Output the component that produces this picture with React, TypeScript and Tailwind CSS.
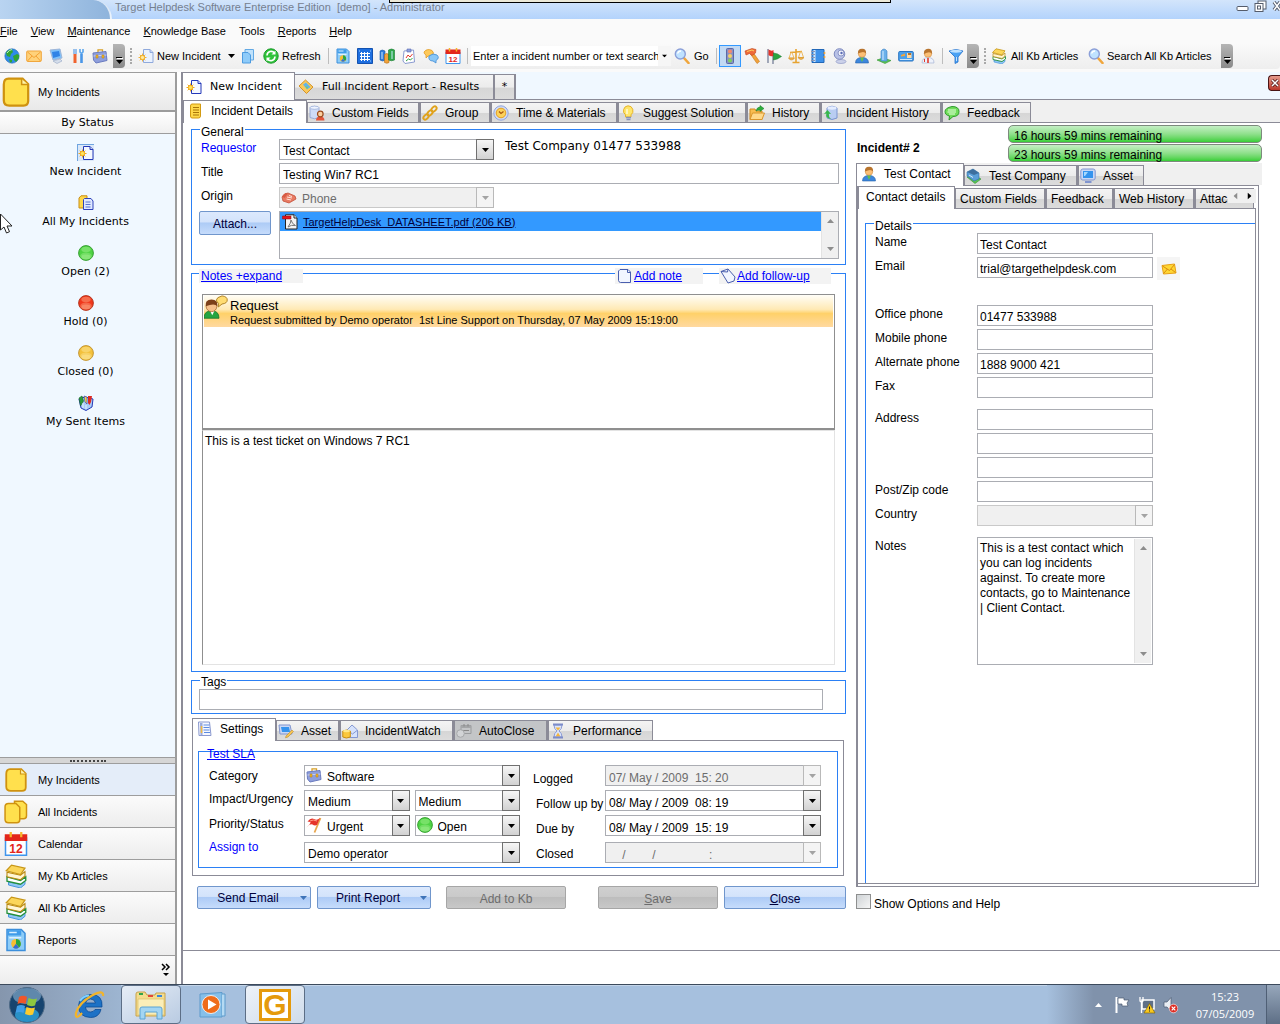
import { ReactNode } from "react";
import clsx from "clsx";

const icons: Record<string, ReactNode> = {
  globe: (
    <>
      <circle cx="8" cy="8" r="7.2" fill="#2f8be8" stroke="#2a6fb5" strokeWidth=".6" />
      <path d="M2 5Q4 1 8 1.500L9 4 7 6 6 9 3 8ZM9 8l4-2 2 1v3l-3 4-2-2ZM5 11l3 1v2l-2 .8z" fill="#31a534" />
      <path d="M3 5q2-3 5-3.500" stroke="#b9f2b4" fill="none" />
    </>
  ),
  mail: (
    <>
      <rect x=".7" y="3" width="14.600" height="10.500" rx="1" fill="#ffd27a" stroke="#f0a63c" />
      <path d="M1.500 4 8 9.500 14.500 4M1.500 13 6 8M14.500 13 10 8" stroke="#f3a133" fill="none" />
    </>
  ),
  mailTilt: (
    <>
      <path d="M1 4.500 13.500 3 15 12 2.500 13Z" fill="#ffd633" stroke="#e8a013" />
      <path d="M1.500 5 8.500 9.500 13.500 3.500M2.500 12.500 6.500 8M14.500 11.500 10 8" stroke="#d88c0e" fill="none" />
    </>
  ),
  server: (
    <>
      <path d="M2 2 12 1l2 9-9 2Z" fill="#7cc0fa" stroke="#9fb6d8" />
      <path d="M4 4l7-1 1 5-7 2z" fill="#2f83e6" />
      <path d="M5 13l7-2 2 2-5 2.500z" fill="#d5deeb" stroke="#93a6c4" strokeWidth=".6" />
    </>
  ),
  tools: (
    <>
      <path d="M4 1v5M6 1v5" stroke="#78aee8" strokeWidth="1.500" />
      <path d="M5 6v9" stroke="#f0632e" strokeWidth="3" />
      <path d="M10 1v3l1.500 1.500L13 4V1" stroke="#5aa6ee" strokeWidth="1.600" fill="none" />
      <path d="M11.500 6v9" stroke="#4996e8" strokeWidth="2.600" />
    </>
  ),
  briefcase: (
    <>
      <path d="M6 4V1.800h4.500V4" stroke="#d7a027" strokeWidth="1.300" fill="none" />
      <path d="M1 5l13-1.500 1 9L4 15 1.500 12Z" fill="#8f9fdc" stroke="#6a7bbf" />
      <path d="M1.500 8 14.500 7" stroke="#c7d0f3" />
      <path d="M4 7h2v3H4zM10 7h2v3h-2z" fill="#f5b829" stroke="#b07c10" strokeWidth=".5" />
    </>
  ),
  newDoc: (
    <>
      <path d="M5.500 1.500H12L15 4.500V14.500H5.500Z" fill="#f4f8ff" stroke="#2438b8" />
      <path d="M12 1.500v3h3" fill="#c9d6f7" stroke="#2438b8" />
      <path d="M4.500 4.500v8M.5 8.500h8M1.700 5.700l5.600 5.600M7.300 5.700l-5.600 5.600" stroke="#f1a91d" />
      <circle cx="4.500" cy="8.500" r="2.200" fill="#ffe45c" stroke="#f1a91d" />
    </>
  ),
  newDocSoft: (
    <>
      <path d="M5.500 1.500H12L15 4.500V14.500H5.500Z" fill="#eaf2ff" stroke="#8fa9dc" />
      <path d="M12 1.500v3h3" fill="#c9d6f7" stroke="#8fa9dc" />
      <path d="M4.500 5.500v8M.5 9.500h8M1.700 6.700l5.600 5.600M7.300 6.700l-5.600 5.600" stroke="#f5b640" />
      <circle cx="4.500" cy="9.500" r="2.200" fill="#ffe9a0" stroke="#f1a91d" />
    </>
  ),
  copy: (
    <>
      <path d="M5 1.500h8.500V12H5Z" fill="#bfe1fb" stroke="#63a9e4" />
      <path d="M2.500 4.500H8L10.500 7V15h-8Z" fill="#8ecbf9" stroke="#4d9be0" />
    </>
  ),
  refresh: (
    <>
      <circle cx="8" cy="8" r="7.200" fill="#2fc33a" stroke="#189a28" />
      <path d="M4 7.500A4.200 4.200 0 0 1 11.500 5M12 8.500A4.200 4.200 0 0 1 4.500 11" stroke="#fff" strokeWidth="1.600" fill="none" />
      <path d="M12.500 2.500v4h-4zM3.500 13.500v-4h4z" fill="#fff" />
    </>
  ),
  report: (
    <>
      <path d="M2 1h9.500L14 3.500V15H2Z" fill="#8ecdf8" stroke="#3c8fdc" />
      <path d="M2.500 1.500h9V5h-9z" fill="#3f9cea" />
      <path d="M3.500 3h5M3.500 6.500h8" stroke="#d9efff" />
      <circle cx="8" cy="10.500" r="3.200" fill="#f6bd33" />
      <path d="M8 10.500V7.300a3.200 3.200 0 0 1 2 5.700Z" fill="#25a744" />
      <path d="M8 10.500l2 2.500a3.200 3.200 0 0 1-4 0z" fill="#2f6fd8" />
    </>
  ),
  grid: (
    <>
      <path d="M.5.500h15v15H.5Z" fill="#1e6fe0" stroke="#1352b0" />
      <path d="M4.500 4v9M7.500 4v9M10.500 4v9M3 5.500h10M3 8.500h10M3 11.500h10" stroke="#fff" />
      <path d="M13 3h1M2 3h1M13 13h1" stroke="#9fd0ff" />
    </>
  ),
  cylinders: (
    <>
      <path d="M1 3q2-2 5 0v9q-2 2-5 0Z" fill="#2f7ddb" stroke="#1c5aa8" strokeWidth=".6" />
      <path d="M5.500 6.500q2-2 4.500 0v8q-2 1.500-4.500 0Z" fill="#f2a33b" stroke="#b36c15" strokeWidth=".6" />
      <path d="M9.500 2q3-2 6 0v10q-3 1.500-6 0Z" fill="#2fa74b" stroke="#1a7a30" strokeWidth=".6" />
      <path d="M3 4v7M13 3v8" stroke="#c9ecff" />
    </>
  ),
  clipboard: (
    <>
      <path d="M3 3 12.500 2l1 12L4 15.500 2 13Z" fill="#fff" stroke="#8a9bd0" />
      <path d="M6 1h4v3H6z" fill="#8fa0dc" stroke="#5a6cb5" strokeWidth=".6" />
      <path d="M5 10l2-3 2 2 2.500-3" stroke="#e2382a" fill="none" />
      <path d="M5 13l2.500-2 2 1 2-2" stroke="#2ea044" fill="none" />
    </>
  ),
  chat: (
    <>
      <path d="M1 4q3-4 8-1.500Q12 5 9 7.500L5 8 3 10V7Q1 6 1 4Z" fill="#fdc95a" stroke="#e29a23" strokeWidth=".8" />
      <path d="M6 8q4-3.500 8-1 3 3-1 5.500v2.500l-3-2Q5 13 6 8Z" fill="#8ac7f6" stroke="#3f8bd6" strokeWidth=".8" />
    </>
  ),
  calendar: (
    <>
      <path d="M1 4h14v11.500H1Z" fill="#fff" stroke="#3f95ec" />
      <path d="M.5 1.500h15V6H.5Z" fill="#e3261b" />
      <path d="M4.500 0v3.500M11.500 0v3.500" stroke="#f7b52a" strokeWidth="1.500" />
      <text x="8" y="13.800" textAnchor="middle" fontSize="8" fontWeight="bold" fontFamily="Liberation Sans" fill="#e3261b">
        12
      </text>
    </>
  ),
  search: (
    <>
      <path d="M9.500 9.500 14.500 15" stroke="#f0a63c" strokeWidth="2.600" strokeLinecap="round" />
      <circle cx="6.300" cy="6" r="5" fill="#bfe2ff" stroke="#8b9fd8" strokeWidth="1.400" />
      <path d="M3.500 5.500q1-2.500 3.500-2.500" stroke="#fff" fill="none" strokeWidth="1.300" />
    </>
  ),
  traffic: (
    <>
      <rect x="4.500" y=".5" width="7" height="15" rx="1" fill="#8791c4" stroke="#5d68a3" />
      <circle cx="8" cy="3.500" r="2" fill="#f3876f" />
      <circle cx="8" cy="8" r="2" fill="#f7cf62" />
      <circle cx="8" cy="12.500" r="2" fill="#7ed05c" />
    </>
  ),
  hammer: (
    <>
      <path d="M6.500 6l6.500 9.500 2.500-2L9.500 5Z" fill="#f2a33b" stroke="#c2741a" strokeWidth=".6" />
      <path d="M1 3l7-2.500 4 1L11.500 5 8 7.500 5.500 5.500 2 7Z" fill="#ee6a3a" stroke="#c3431a" strokeWidth=".6" />
      <path d="M3 3.500 8 2l2 1" stroke="#ffd25e" fill="none" />
    </>
  ),
  flags: (
    <>
      <path d="M2 1v14M7 4v12" stroke="#6c7691" strokeWidth="1.200" />
      <path d="M2.500 1.500q3 2 5 .5v6q-3 1-5-1Z" fill="#e5342a" />
      <path d="M7.500 5q4 0 8 3.500-4 3-8 3.500Z" fill="#2aa53f" stroke="#127226" strokeWidth=".5" />
    </>
  ),
  scales: (
    <>
      <path d="M8 1v13M4.500 14.500h7M2 4.500l12-1" stroke="#e6a330" strokeWidth="1.600" />
      <path d="M3 4.500 1 10h5L4 4.500M12.500 3.500l-2 6h5l-2-6" stroke="#edba62" fill="none" />
      <path d="M.5 10h6q-1 2-3 2t-3-2ZM10 9.500h6q-1 2-3 2t-3-2Z" fill="#f2b34b" stroke="#cb8820" strokeWidth=".5" />
    </>
  ),
  notebook: (
    <>
      <path d="M2 1.500h12v13H2Z" fill="#3f92ea" stroke="#2368b8" />
      <path d="M4.500 2v12" stroke="#cfe5fb" strokeWidth="2" />
      <path d="M1 3.500h4M1 6.500h4M1 9.500h4M1 12.500h4" stroke="#8a97b5" />
      <path d="M14.500 4v2M14.500 8v2" stroke="#f2a33b" strokeWidth="1.600" />
    </>
  ),
  webcam: (
    <>
      <ellipse cx="9" cy="13.500" rx="5" ry="2" fill="#ccd2ea" stroke="#8f99c4" strokeWidth=".7" />
      <circle cx="7.500" cy="6" r="5.300" fill="#b8c1e6" stroke="#7e8abf" />
      <circle cx="9" cy="5" r="3" fill="#eef1fb" stroke="#8b95c6" />
      <circle cx="9.500" cy="5" r="1.200" fill="#5a6cb5" />
    </>
  ),
  user: (
    <>
      <path d="M1.500 15q0-5.500 6.500-5.500t6.500 5.500Z" fill="#3d87dc" stroke="#2661ab" strokeWidth=".6" />
      <path d="M6 9.500h4L8 14Z" fill="#5fc24e" />
      <circle cx="8" cy="5.500" r="3.800" fill="#fbbf75" stroke="#c9843c" strokeWidth=".5" />
      <path d="M4 5.500Q3.500 1 8 .8t4 4.700Q10 2.500 4 5.500Z" fill="#b8742e" />
    </>
  ),
  tower: (
    <>
      <path d="M1 12l6-2 8 2.500-6 3Z" fill="#5cc653" stroke="#2f9030" strokeWidth=".6" />
      <path d="M5 3q3-4 6 0v10H5Z" fill="#6ab0ea" stroke="#3d81c4" strokeWidth=".6" />
      <path d="M7 3v9" stroke="#b8dcfa" strokeWidth="1.400" />
    </>
  ),
  card: (
    <>
      <rect x=".7" y="3.500" width="14.600" height="9.500" rx="1" fill="#4ba0ec" stroke="#2a74c2" />
      <path d="M9 5h4.500v5H9Z" fill="#ffd9a3" />
      <path d="M10 5h3v2h-3Z" fill="#b8742e" />
      <path d="M3 7l4-1.500V8L3 8.500Z" fill="#f5a43a" />
      <path d="M2 11.500h12" stroke="#cde6fc" />
    </>
  ),
  doctor: (
    <>
      <path d="M2 15q0-5.500 6-5.500t6 5.500Z" fill="#eef2fb" stroke="#a8b4d4" strokeWidth=".7" />
      <path d="M8 10v5" stroke="#e2382a" strokeWidth="1.600" />
      <path d="M4.500 11v3" stroke="#e2382a" />
      <circle cx="8" cy="5.500" r="3.800" fill="#fbbf75" stroke="#c9843c" strokeWidth=".5" />
      <path d="M4 6Q3.500 1 8 .8T12 6Q10 2.500 4 6Z" fill="#b8742e" />
    </>
  ),
  funnel: (
    <>
      <path d="M1 3q7-3 14 0l-5 6v5l-3 1.500V9Z" fill="#4aa2f4" stroke="#2470cc" strokeWidth=".8" />
      <ellipse cx="8" cy="3.200" rx="6" ry="1.500" fill="#bfe2ff" />
      <path d="M8.500 9v4" stroke="#c3e3ff" />
    </>
  ),
  books: (
    <>
      <path d="M3 12l8 1.500 3-2v2L11 16 3 14Z" fill="#8ec6f4" stroke="#3c8fdc" strokeWidth=".6" />
      <path d="M2 8.500l9 2.500 3.500-2.500v2.500L11 13.500 2 11.500Z" fill="#fff" stroke="#25913a" strokeWidth=".9" />
      <path d="M2 5.500l9 2 3-2.500v3L11 10.500 2 8.500Z" fill="#fff6d5" stroke="#b8860b" strokeWidth=".7" />
      <path d="M1.500 4.500 5 .8l9 2L11 7Z" fill="#fbd65a" stroke="#c79616" strokeWidth=".8" />
    </>
  ),
  page: (
    <>
      <path d="M4 .8h7.500l3 3v9q0 2.400-2.500 2.400H4.500Q1.500 15.200 1.500 12.500V4Q1.500.8 4 .8Z" fill="#ffe04d" stroke="#cf9210" strokeWidth="1.200" />
      <path d="M11 1v3h3.500" fill="#fff3a8" stroke="#cf9210" strokeWidth=".8" />
    </>
  ),
  pages: (
    <>
      <path d="M7 .8h5.500L15 3v7.500q0 2-2 2H7Z" fill="#ffe04d" stroke="#cf9210" />
      <path d="M3 2.300h5l2.500 2.500v8.400q0 2-2 2H3q-2.300 0-2.300-2.300V4.500Q.7 2.300 3 2.300Z" fill="#ffe04d" stroke="#cf9210" />
    </>
  ),
  docPair: (
    <>
      <path d="M3 .8h6V13H1V3Z" fill="#ffd84a" stroke="#c98e12" />
      <path d="M6.500 3.500h6.500l2 2.500v8.500H5.500V4.500Z" fill="#dfe9ff" stroke="#2f43bb" />
      <path d="M7.500 7h5M7.500 9.500h5M7.500 12h5" stroke="#4c68cc" strokeWidth=".9" />
    </>
  ),
  sent: (
    <>
      <path d="M1 4l6-2 8 2-1 8-6 3.500L3 13Z" fill="#a9ccf6" stroke="#2438b8" />
      <path d="M1 3l3-2 1.500 5-3 5Z" fill="#2a9a3d" stroke="#176326" strokeWidth=".6" />
      <path d="M6 1l3 1v7L7 7Z" fill="#fbd24b" stroke="#2438b8" strokeWidth=".6" />
      <path d="M10 1h4l-1 6-1.500 3L10 8Z" fill="#dd2a24" />
      <path d="M5 8v5M8 10v4" stroke="#e4f1ff" />
    </>
  ),
  note: (
    <>
      <path d="M4 1h8.500v12q0 2-2 2H4Q2.500 15 2.500 13V3Q2.500 1 4 1Z" fill="#ffd84a" stroke="#d29a12" />
      <path d="M5 4.500h6M5 7h6M5 9.500h6M5 12h6" stroke="#a97608" />
    </>
  ),
  map: (
    <>
      <path d="M1 7 7.500 1 15 8 8.500 14.500Z" fill="#fbc95a" stroke="#d49429" />
      <path d="M5 5.500 8 3.500l4.500 4.500-3.500 2.500Z" fill="#62b4e8" />
      <path d="M7 7l3 1-1 2z" fill="#78cc62" />
    </>
  ),
  dbUser: (
    <>
      <path d="M1 2.500q4.500-2.500 9 0v10q-4.500 2.500-9 0Z" fill="#cfdcf6" stroke="#8a9fd0" strokeWidth=".8" />
      <ellipse cx="5.500" cy="2.700" rx="4.400" ry="1.600" fill="#eef4ff" stroke="#8a9fd0" strokeWidth=".6" />
      <path d="M7 15.500q0-4 4.200-4t4.300 4Z" fill="#e2563b" />
      <circle cx="11.300" cy="9" r="2.800" fill="#fcd0a0" stroke="#9c4a1c" strokeWidth="1.200" />
    </>
  ),
  chain: (
    <g fill="none" stroke="#e0a21b" strokeWidth="2">
      <ellipse cx="4" cy="12" rx="3" ry="2" transform="rotate(-45 4 12)" />
      <ellipse cx="8" cy="8" rx="3" ry="2" transform="rotate(-45 8 8)" />
      <ellipse cx="12" cy="4" rx="3" ry="2" transform="rotate(-45 12 4)" />
    </g>
  ),
  clock: (
    <>
      <circle cx="8" cy="8" r="7.200" fill="#cfdaf6" stroke="#93a5d8" />
      <circle cx="8" cy="8" r="4.800" fill="#fcd25a" stroke="#e5a020" />
      <path d="M6 6.500 8 8.500 10.500 6.500" stroke="#a8550f" fill="none" strokeWidth="1.300" />
    </>
  ),
  bulb: (
    <>
      <path d="M8 .8a5 5 0 0 1 3 9V12H5.500V9.800A5 5 0 0 1 8 .8Z" fill="#ffe66b" stroke="#e5b32a" />
      <path d="M6 12.500h5M6.500 14.500h4" stroke="#8793bd" strokeWidth="1.600" />
      <path d="M7 4v5" stroke="#fffbd8" strokeWidth="1.500" />
    </>
  ),
  folder: (
    <>
      <path d="M1 4h5l1 2h6v8.500H1Z" fill="#f8bd4f" stroke="#d18a20" />
      <path d="M3.500 8H15.500L13 14.500H1Z" fill="#ffd98a" stroke="#d9952c" />
      <path d="M7 6q1-4 4-4V.5L15 3.500 11 6.500V5Q8.500 5 7 6Z" fill="#2fae3c" stroke="#187a26" strokeWidth=".5" />
    </>
  ),
  cylinderArrow: (
    <>
      <path d="M4 3q5-3.500 10 0v10q-5 3-10 0Z" fill="#b9cdf2" stroke="#7b94d0" />
      <ellipse cx="9" cy="3" rx="4.600" ry="1.700" fill="#e4edff" />
      <path d="M8 14Q2 13 3.500 8.500L1 9l3.500-4L8 9 5.800 8.700Q5.500 12 8 14Z" fill="#37b84a" />
    </>
  ),
  feedback: (
    <>
      <path d="M8 1.500q7 0 7 5t-6 5l-4 3.500.5-4Q1 10 1 6.500t7-5Z" fill="#6fdc58" stroke="#2d9a2c" />
      <path d="M4 5h8M3.500 7h8.500M5 9h6" stroke="#e8ffe0" />
    </>
  ),
  phone: (
    <>
      <path d="M1 8q2-4 6-4l7 3 1 3-7 4-6-2Z" fill="#e87a62" stroke="#c4503a" strokeWidth=".8" />
      <path d="M6 8l5 1M5.500 10l4.500 1M8 6.500l3 1" stroke="#ffe2d8" />
      <path d="M1 7.500 4.500 4l2 1-3 4Z" fill="#d85a44" />
    </>
  ),
  pdf: (
    <>
      <path d="M3.500.8h8.700L15 4v11H3.500Z" fill="#f4f4f4" stroke="#222" />
      <path d="M12 .8V4h3" fill="#fff" stroke="#222" />
      <path d="M.5 2h8.500v3H.5Z" fill="#e3141b" stroke="#8c0a0e" strokeWidth=".5" />
      <path d="M6 13q3-4 3-7 1 4 4.500 5.500Q9 10.500 6 13Z" fill="none" stroke="#777" />
    </>
  ),
  personChat: (
    <>
      <path d="M0 15.500Q0 10.500 5 10.500t5 5Z" fill="#25a541" stroke="#127226" strokeWidth=".5" />
      <path d="M4 10.500h3L5.500 13.500Z" fill="#fff" />
      <circle cx="5" cy="7.500" r="3.600" fill="#f6c08c" stroke="#a3632a" strokeWidth=".5" />
      <path d="M1.200 7.500Q.5 3 5 3t3.900 4.500Q7 5 1.200 7.500Z" fill="#7c3f1a" />
      <path d="M12 .6q3.500.4 3.500 2.700T12 6L9.500 8l.3-2.500Q8.300 5 8.300 3.300T12 .6Z" fill="#ffdc73" stroke="#a97a1c" strokeWidth=".6" />
    </>
  ),
  sheet: (
    <>
      <path d="M4 1.500H12L14.500 4v10.500h-10Q2.500 14 2.500 12.500V3Z" fill="#f1f5ff" stroke="#4a5fae" />
      <path d="M11.500 1.500V4.500h3" fill="none" stroke="#4a5fae" />
    </>
  ),
  sheetTilt: (
    <>
      <path d="M1 3.500 8 1l7 8-1 4-6 2Z" fill="#f1f5ff" stroke="#4a5fae" />
      <path d="M8 1l-.5 3L1 3.500" fill="none" stroke="#4a5fae" />
    </>
  ),
  company: (
    <>
      <path d="M1 9l7-2 7 4-6 4.500Z" fill="#5cc653" stroke="#2f9030" strokeWidth=".6" />
      <path d="M1 4l6-3 6 4v6l-5 2L1 8Z" fill="#5b9fd8" stroke="#32719f" strokeWidth=".6" />
      <path d="M1 4l6-3 6 4-5 2Z" fill="#3d6f9e" />
      <path d="M3 7l4 2.500" stroke="#d8ecfc" />
    </>
  ),
  asset: (
    <>
      <rect x=".8" y="1" width="14.400" height="11" rx="2" fill="#c9d7f5" stroke="#8195cf" />
      <rect x="3" y="3" width="10" height="7" fill="#3593ee" />
      <path d="M4 4h4l-3 4H4Z" fill="#a5d8ff" />
      <path d="M5 14h6.500" stroke="#8195cf" strokeWidth="2" />
    </>
  ),
  assetEdit: (
    <>
      <path d="M1 2h11l2 9H2Z" fill="#c9d7f5" stroke="#8195cf" />
      <path d="M3 4h8l1 5H4Z" fill="#3593ee" />
      <path d="M8 13l6-6 1.500 1.500L10 14l-2.500.8Z" fill="#f6c555" stroke="#b98116" strokeWidth=".5" />
    </>
  ),
  list: (
    <>
      <path d="M1.500 1h11l1.500 13.500H2Z" fill="#f5f7ff" stroke="#8a99cf" />
      <path d="M3 2h2.500v12H3.500Z" fill="#9aaade" />
      <path d="M6.500 4h6M6.500 6.500h6M6.500 9h6M7 11.500h6" stroke="#5c8be0" />
      <path d="M4.500 5v7" stroke="#f2b93c" strokeWidth="1.500" />
    </>
  ),
  watch: (
    <>
      <path d="M5 7l5-5 5.500 5v7.500H6Z" fill="#d6e2fb" stroke="#8498d2" />
      <path d="M6 7.500 10.500 11 15 7.500" stroke="#8498d2" fill="none" />
      <path d="M.8 8q4-2 7.500 0v6q-4 2-7.500 0Z" fill="#fbc83c" stroke="#c98e12" />
      <ellipse cx="4.500" cy="8" rx="3.500" ry="1.200" fill="#ffe88a" />
    </>
  ),
  autoClose: (
    <>
      <path d="M5 2.500h10v8H5Z" fill="#c4c6c8" stroke="#9a9c9e" />
      <path d="M5 2.500h10v2.500H5Z" fill="#a4a6a8" />
      <path d="M8 1v2.500M12 1v2.500M7 7.500h6" stroke="#888" />
      <circle cx="4.500" cy="10.500" r="3.800" fill="#d2d4d6" stroke="#a6a8aa" />
    </>
  ),
  hourglass: (
    <>
      <path d="M4 2h8q0 4-3 6 3 2 3 6H4q0-4 3-6Q4 6 4 2Z" fill="#dbe6fc" stroke="#8b9bd6" />
      <path d="M5.500 4.500h5L8 7.500ZM5.500 13.500 8 9.500l2.500 4Z" fill="#f5b53c" />
      <path d="M3 1.500h10M3 14.500h10" stroke="#7c8cc9" strokeWidth="2" />
    </>
  ),
  redFlag: (
    <>
      <path d="M14.500 1 8.500 15.500" stroke="#e8a54c" strokeWidth="1.800" />
      <path d="M1.500 4.500Q5 0 8 2t6-1l-3 7Q8.500 9 6.500 7.500T.5 10.500Q4.500 7 4.500 5Z" fill="#e5342a" />
      <path d="M4 4q3-2 7 0" stroke="#ff9a86" fill="none" />
    </>
  ),
  greenBall: <Ball light="#b4f7a0" main="#4fd244" edge="#2f9a2a" />,
  redBall: <Ball light="#ffc09a" main="#f0381c" edge="#b03018" />,
  yellowBall: <Ball light="#fff0ae" main="#f3c13c" edge="#c08f28" />,
};

function Ball({ light, main, edge }: { light: string; main: string; edge: string }) {
  return (
    <>
      <circle cx="8" cy="8" r="7.400" fill={main} stroke={edge} strokeWidth=".9" />
      <ellipse cx="8" cy="4.500" rx="4.600" ry="2.800" fill={light} opacity=".4" />
      <ellipse cx="8" cy="11" rx="5.800" ry="3.600" fill={light} opacity=".35" />
      <ellipse cx="8" cy="12" rx="4.400" ry="2.400" fill={light} opacity=".35" />
    </>
  );
}

const Icon = ({ name, className = "size-4" }: { name: string; className?: string }) => (
  <svg viewBox="0 0 16 16" className={clsx("shrink-0", className)} aria-hidden="true">
    {icons[name]}
  </svg>
);

const Caret = ({ className = "text-black" }: { className?: string }) => (
  <svg viewBox="0 0 7 4" className={clsx("h-1 w-[7px] shrink-0", className)} aria-hidden="true">
    <path d="M0 0h7L3.500 4Z" fill="currentColor" />
  </svg>
);

/* ---------- toolbar ---------- */

const ToolIcon = ({ name, title, active }: { name: string; title: string; active?: boolean }) => (
  <button
    title={title}
    className={clsx(
      "flex h-[22px] w-[22px] shrink-0 items-center justify-center",
      active && "border border-[#3399ff] bg-[#c2d9f3]"
    )}
  >
    <Icon name={name} />
  </button>
);

const Separator = ({ className }: { className: string }) => (
  <div className={clsx("flex h-4 shrink-0 justify-center", className)}>
    <div className="w-px bg-[#bdbdbd]"></div>
  </div>
);

const Overflow = () => (
  <button
    title="Toolbar options"
    className="flex h-6 w-3 shrink-0 flex-col items-center justify-end gap-0.5 rounded-r-sm bg-linear-to-b from-[#b5b5b5] to-[#8a8a8a] pb-1"
  >
    <span className="h-px w-1.5 bg-black shadow-[1px_1px_0_white]"></span>
    <Caret />
  </button>
);

const Grip = () => (
  <div className="flex h-4 w-3 shrink-0 justify-center">
    <div className="border-l-2 border-dotted border-[#a9a9a9]"></div>
  </div>
);

const menus = [
  ["F", "ile"],
  ["V", "iew"],
  ["M", "aintenance"],
  ["K", "nowledge Base"],
  ["", "Tools"],
  ["R", "eports"],
  ["H", "elp"],
];

const Header = () => (
  <header className="bg-[#fafafa] text-[11px] leading-[14px]">
    {/* title bar */}
    <div className="relative flex h-[19px] items-start justify-between overflow-hidden bg-linear-to-b from-[#d3e5fb] to-[#b3d3fc]">
      <div className="flex h-full text-[#76808f]">
        <div className="h-full w-[112px] rounded-tr-[28px] border-r-2 border-white/70 bg-linear-to-r from-[#b9d4f1] to-[#8fb4dc]"></div>
        <h1 className="pl-[3px] whitespace-pre">
          Target Helpdesk Software Enterprise Edition  [demo] - Administrator
        </h1>
      </div>
      <div className="absolute left-[389px] top-0 h-[3px] w-[502px] border-x border-b border-black bg-[#ece9d8]"></div>
      <svg viewBox="0 0 44 14" className="h-3.5 w-11 shrink-0" aria-hidden="true">
        <g fill="#fff" stroke="#555c6b">
          <rect x="1" y="6.500" width="11" height="4" rx="1" />
          <rect x="22" y="1" width="8" height="8" />
          <rect x="19" y="3.500" width="8" height="8" />
          <rect x="21.500" y="6" width="3" height="3" />
        </g>
        <path d="M38 2l6 8M44 2l-6 8" stroke="#555c6b" strokeWidth="3.500" />
        <path d="M38 2l6 8M44 2l-6 8" stroke="#fff" strokeWidth="1.500" />
      </svg>
    </div>
    {/* menu */}
    <nav className="flex h-6 items-center gap-[13px]">
      {menus.map(([key, rest]) => (
        <button key={rest}>
          <span className="underline">{key}</span>
          {rest}
        </button>
      ))}
    </nav>
    {/* toolbar */}
    <div className="h-[29px]">
      <div className="flex h-[26px] items-center overflow-hidden rounded-r bg-linear-to-b from-[#fafafa] to-[#eeeeee] pl-px">
        <ToolIcon name="globe" title="Web" />
        <ToolIcon name="mail" title="Email" />
        <ToolIcon name="server" title="Assets" />
        <ToolIcon name="tools" title="Tools" />
        <ToolIcon name="briefcase" title="Categories" />
        <div className="pl-0.5">
          <Overflow />
        </div>
        <Grip />
        <button className="flex w-[88px] shrink-0 items-center gap-[3px] pl-px">
          <Icon name="newDocSoft" />
          New Incident
        </button>
        <button title="New incident options" className="flex w-3 shrink-0 items-center justify-center">
          <Caret />
        </button>
        <ToolIcon name="copy" title="Copy" />
        <button className="flex w-[66px] shrink-0 items-center gap-[3px] pl-1">
          <Icon name="refresh" />
          Refresh
        </button>
        <Separator className="w-[7px]" />
        <ToolIcon name="report" title="Report" />
        <ToolIcon name="grid" title="Grid" />
        <ToolIcon name="cylinders" title="Statistics" />
        <ToolIcon name="clipboard" title="Performance" />
        <ToolIcon name="chat" title="Chat" />
        <ToolIcon name="calendar" title="Calendar" />
        <Separator className="w-[7px]" />
        <div className="flex h-5 w-[200px] shrink-0 items-center bg-white pl-0.5">
          <input
            aria-label="Search incidents"
            className="w-[185px] bg-transparent outline-none"
            defaultValue="Enter a incident number or text search here"
          />
          <button title="Recent searches" className="flex h-full flex-1 items-center justify-center bg-[#f6f6f6]">
            <Caret className="scale-75 text-black" />
          </button>
        </div>
        <button className="flex w-[42px] shrink-0 items-center gap-1 pl-[3px]">
          <Icon name="search" />
          Go
        </button>
        <Separator className="w-1.5" />
        <ToolIcon name="traffic" title="Status" active />
        <ToolIcon name="hammer" title="Actions" />
        <ToolIcon name="flags" title="Priorities" />
        <ToolIcon name="scales" title="Service levels" />
        <ToolIcon name="notebook" title="Address book" />
        <ToolIcon name="webcam" title="Remote" />
        <ToolIcon name="user" title="Contacts" />
        <ToolIcon name="tower" title="Companies" />
        <ToolIcon name="card" title="Cards" />
        <ToolIcon name="doctor" title="Operators" />
        <Separator className="w-1.5" />
        <ToolIcon name="funnel" title="Filter" />
        <Overflow />
        <Grip />
        <button className="flex w-[97px] shrink-0 items-center gap-1">
          <Icon name="books" />
          All Kb Articles
        </button>
        <button className="flex w-[133px] shrink-0 items-center gap-[3px] whitespace-nowrap">
          <Icon name="search" />
          Search All Kb Articles
        </button>
        <Overflow />
      </div>
    </div>
  </header>
);

/* ---------- sidebar ---------- */

const statusItems = [
  { icon: "newDoc", label: "New Incident" },
  { icon: "docPair", label: "All My Incidents" },
  { icon: "greenBall", label: "Open (2)" },
  { icon: "redBall", label: "Hold (0)" },
  { icon: "yellowBall", label: "Closed (0)" },
  { icon: "sent", label: "My Sent Items" },
];

const navItems = [
  { icon: "page", label: "My Incidents" },
  { icon: "pages", label: "All Incidents" },
  { icon: "calendar", label: "Calendar" },
  { icon: "books", label: "My Kb Articles" },
  { icon: "books", label: "All Kb Articles" },
  { icon: "report", label: "Reports" },
];

const Sidebar = () => (
  <aside className="relative flex w-[177px] shrink-0 flex-col border-r-2 border-t border-[#9d9d9d] text-[11px]">
    <div className="flex h-[39px] items-center gap-[7px] border-b-2 border-[#9d9d9d] bg-linear-to-b from-[#fbfbfb] to-[#e9e9e9] pl-px">
      <Icon name="page" className="size-[30px]" />
      My Incidents
    </div>
    <div className="flex h-[22px] items-center justify-center border-b border-[#9d9d9d] bg-linear-to-b from-white to-[#f0f0f0] font-['DejaVu_Sans',Verdana,sans-serif]">
      By Status
    </div>
    <div className="flex flex-1 flex-col items-center gap-[15px] bg-[#f0f8ff] pt-2.5 pr-1 font-['DejaVu_Sans',Verdana,sans-serif]">
      {statusItems.map((item, i) => (
        <button key={item.label} className="flex flex-col items-center gap-[3px] leading-4">
          <span className={clsx(i === 0 && "border-t border-l border-[#6fa5e0] bg-[#dbe8f8]")}>
            <Icon name={item.icon} />
          </span>
          {item.label}
        </button>
      ))}
    </div>
    {/* splitter */}
    <div className="flex h-[7px] items-center justify-center border-y border-[#9d9d9d] bg-[#d6d6d6]">
      <div className="w-9 border-t-2 border-dotted border-[#444]"></div>
    </div>
    {navItems.map((item, i) => (
      <button
        key={item.label}
        className={clsx(
          "flex h-8 items-center gap-[10px] border-b border-[#9d9d9d] pl-1",
          i === 0 ? "bg-[#e4edf9]" : "bg-linear-to-b from-[#fbfbfb] to-[#ededed]"
        )}
      >
        <Icon name={item.icon} className="size-6" />
        {item.label}
      </button>
    ))}
    <div className="flex h-7 items-center justify-end bg-linear-to-b from-[#fbfbfb] to-[#ededed] pr-1">
      <button title="Configure buttons">
        <svg viewBox="0 0 10 14" className="h-3.5 w-2.5" aria-hidden="true">
          <path d="M1 1l3 3-3 3M5 1l3 3-3 3" fill="none" stroke="#000" strokeWidth="1.500" />
          <path d="M2 10h6l-3 3Z" />
        </svg>
      </button>
    </div>
    {/* mouse pointer */}
    <svg viewBox="0 0 14 22" className="absolute left-0 top-[140px] h-[22px] w-3.5" aria-hidden="true">
      <path d="M.5 1v16l3.500-3 2.500 6 3-1.300L7 13h5Z" fill="#fff" stroke="#222" />
    </svg>
  </aside>
);

/* ---------- shared controls ---------- */

type TTab = { label: string; icon?: string; width: string; disabled?: boolean };

const tabShade = "bg-[linear-gradient(#f4f4f4_0%,#ececec_50%,#d6d6d6_55%,#dcdcdc_100%)]";

const Tabs = ({ tabs, label }: { tabs: TTab[]; label: string }) => (
  <div role="tablist" aria-label={label} className="flex items-end">
    {tabs.map((tab, i) => (
      <button
        key={tab.label}
        role="tab"
        aria-selected={i === 0}
        className={clsx(
          "flex shrink-0 items-center gap-[7px] whitespace-nowrap border border-b-0 border-[#8b8b97]",
          tab.width,
          i === 0 ? "relative z-10 -mb-px h-[23px] bg-white pb-0.5" : "h-5",
          i > 1 && "border-l-2",
          i > 0 && !tab.disabled && tabShade,
          tab.disabled && "bg-[#c3c5c7]",
          !tab.icon && (i === 0 ? "pl-[7px]" : "pl-1"),
          tab.icon && (i === 0 ? "pl-1" : "pl-px")
        )}
      >
        {tab.icon && <Icon name={tab.icon} />}
        {tab.label}
      </button>
    ))}
  </div>
);

type TCombo = {
  id: string;
  value: string;
  label?: string;
  icon?: string;
  disabled?: boolean;
};

const ComboArrow = ({ disabled }: { disabled?: boolean }) => (
  <span
    className={clsx(
      "pointer-events-none absolute inset-y-0 right-0 flex w-[18px] items-center justify-center border",
      disabled ? "border-[#b9b9b9] bg-[#f4f4f4]" : "border-[#707070] bg-linear-to-b from-[#f6f6f6] to-[#d2d2d2]"
    )}
  >
    <Caret className={disabled ? "text-[#a3a3a3]" : "text-black"} />
  </span>
);

const Combo = ({ id, value, label, icon, disabled }: TCombo) => (
  <div className="relative h-[21px] min-w-0 flex-1">
    <select
      id={id}
      aria-label={label}
      disabled={disabled}
      className={clsx(
        "size-full appearance-none border pt-0.5 leading-[14px] opacity-100 outline-none",
        icon ? "pl-[22px]" : "pl-[3px]",
        disabled ? "border-[#c9c9c9] bg-[#f0f0f0] text-[#6d6d6d]" : "border-[#abadb3] bg-white"
      )}
    >
      <option>{value}</option>
    </select>
    {icon && <Icon name={icon} className="pointer-events-none absolute left-0.5 top-0.5 size-4" />}
    <ComboArrow disabled={disabled} />
  </div>
);

const DateField = ({ id, value, disabled }: { id: string; value: string; disabled?: boolean }) => (
  <div className="relative h-[21px]">
    <input
      id={id}
      defaultValue={value}
      disabled={disabled}
      className={clsx(
        "size-full border border-[#abadb3] pt-1 pr-5 pl-[3px] outline-none",
        disabled ? "bg-[#f0f0f0] text-[#6d6d6d]" : "bg-white"
      )}
    />
    <ComboArrow disabled={disabled} />
  </div>
);

const ScrollBar = () => (
  <div className="flex w-[17px] shrink-0 flex-col items-center justify-between border-l border-[#e3e3e3] bg-[#f0f0f0] py-[7px]">
    <Caret className="rotate-180 text-[#8d8d8d]" />
    <Caret className="text-[#8d8d8d]" />
  </div>
);

const Button = ({
  children,
  disabled,
  menu,
  className,
}: {
  children: ReactNode;
  disabled?: boolean;
  menu?: boolean;
  className: string;
}) => (
  <button
    disabled={disabled}
    className={clsx(
      "relative flex items-center justify-center rounded-xs border",
      disabled
        ? "border-[#a6a6a6] bg-[linear-gradient(#cfcfcf_0%,#cacaca_45%,#bdbdbd_50%,#c8c8c8_100%)] text-[#6d6d6d]"
        : "border-[#7096cc] bg-[linear-gradient(#dce9fd_0%,#d3e3fb_45%,#adcbf6_50%,#c6dcfb_100%)] text-[#00003c]",
      className
    )}
  >
    {children}
    {menu && <Caret className="absolute right-[3px] text-[#3f74b8]" />}
  </button>
);

const link = "text-[#0000ff] underline";
const group = "relative border border-[#2b80f5]";

/* ---------- incident form ---------- */

const General = () => (
  <fieldset className={clsx(group, "pt-[9px] pr-1.5 pb-[5px] pl-[7px]")}>
    <legend className="absolute -top-[5px] left-2 bg-white px-px">General</legend>
    <div className="grid grid-cols-[80px_1fr] gap-y-[3px]">
      <label htmlFor="requestor" className="pt-0.5 pl-0.5 text-[#0000ff]">
        Requestor
      </label>
      <div className="flex gap-[11px]">
        <div className="flex w-[215px]">
          <Combo id="requestor" value="Test Contact" />
        </div>
        <p className="font-['DejaVu_Sans',Verdana,sans-serif]">Test Company 01477 533988</p>
      </div>
      <label htmlFor="title" className="pt-0.5 pl-0.5">
        Title
      </label>
      <input
        id="title"
        defaultValue="Testing Win7 RC1"
        className="h-[21px] border border-[#abadb3] bg-white pt-0.5 pl-[3px] outline-none"
      />
      <label htmlFor="origin" className="pt-0.5 pl-0.5">
        Origin
      </label>
      <div className="flex w-[215px]">
        <Combo id="origin" value="Phone" icon="phone" disabled />
      </div>
      <Button className="h-6 w-[72px] pt-0.5">Attach...</Button>
      <div className="flex h-12 border border-[#abadb3] bg-white">
        <div className="flex-1">
          <a href="#file" className="flex h-[19px] items-center gap-[5px] bg-[#3399ff] pl-0.5 text-[11px] text-[#00003c]">
            <Icon name="pdf" />
            <span className="underline">TargetHelpDesk_DATASHEET.pdf (206 KB)</span>
          </a>
        </div>
        <ScrollBar />
      </div>
    </div>
  </fieldset>
);

const Notes = () => (
  <section className={clsx(group, "flex flex-1 flex-col px-[10px] pt-5 pb-1.5")}>
    <div className="absolute -top-[6px] right-[14px] left-[7px] flex h-[15px] items-center">
      <div className="w-[104px] bg-[#f3f3f3] pl-0.5">
        <a href="#notes" className={link}>
          Notes +expand
        </a>
      </div>
      <div className="ml-auto flex w-[88px] items-center gap-0.5 bg-[#f3f3f3] pl-px">
        <Icon name="sheet" />
        <a href="#add-note" className={link}>
          Add note
        </a>
      </div>
      <div className="ml-4 flex w-28 items-center gap-px bg-[#f3f3f3] pl-px">
        <Icon name="sheetTilt" />
        <a href="#add-follow-up" className={link}>
          Add follow-up
        </a>
      </div>
    </div>
    <div className="h-[136px] border border-b-2 border-[#8f8f8f] bg-white px-px">
      <div className="flex h-8 gap-0.5 bg-[linear-gradient(#fffef8_0%,#ffe9b4_45%,#ffd169_58%,#ffd9a0_100%)]">
        <Icon name="personChat" className="size-6" />
        <div>
          <h2 className="pt-1 text-[13px]">Request</h2>
          <p className="text-[11px]">
            Request submitted by Demo operator&nbsp; 1st Line Support on Thursday, 07 May 2009 15:19:00
          </p>
        </div>
      </div>
    </div>
    <textarea
      aria-label="Note text"
      defaultValue="This is a test ticket on Windows 7 RC1"
      className="min-h-[235px] flex-1 resize-none border border-[#e3e3e3] border-l-[#8f8f8f] px-0.5 py-[3px] outline-none"
    />
  </section>
);

const settingsTabs: TTab[] = [
  { label: "Settings", icon: "list", width: "w-[84px]" },
  { label: "Asset", icon: "assetEdit", width: "w-[63px]" },
  { label: "IncidentWatch", icon: "watch", width: "w-[114px]" },
  { label: "AutoClose", icon: "autoClose", width: "w-[94px]", disabled: true },
  { label: "Performance", icon: "hourglass", width: "w-[106px]" },
];

const Settings = () => (
  <section className="mt-1 mr-0.5 ml-px">
    <Tabs tabs={settingsTabs} label="Incident settings" />
    <div className="border border-[#8b8b97] px-[5px] pt-2.5 pb-[7px]">
      <fieldset className={clsx(group, "pt-[13px] pr-4 pb-1 pl-2.5")}>
        <legend className="absolute -top-[5px] left-2">
          <a href="#sla" className={link}>
            Test SLA
          </a>
        </legend>
        <div className="grid grid-cols-[95px_1fr_85px_1fr] gap-y-1">
          <label htmlFor="category" className="pt-1">
            Category
          </label>
          <Combo id="category" value="Software" icon="briefcase" />
          <label htmlFor="logged" className="pt-[7px] pl-[13px]">
            Logged
          </label>
          <DateField id="logged" value="07/ May / 2009  15: 20" disabled />

          <label htmlFor="impact" className="pt-0.5">
            Impact/Urgency
          </label>
          <div className="flex gap-[5px]">
            <Combo id="impact" value="Medium" />
            <Combo id="urgency" label="Urgency" value="Medium" />
          </div>
          <label htmlFor="follow-up" className="pt-[7px] pl-4 whitespace-nowrap">
            Follow up by
          </label>
          <DateField id="follow-up" value="08/ May / 2009  08: 19" />

          <label htmlFor="priority" className="pt-0.5">
            Priority/Status
          </label>
          <div className="flex gap-[5px]">
            <Combo id="priority" value="Urgent" icon="redFlag" />
            <Combo id="status" label="Status" value="Open" icon="greenBall" />
          </div>
          <label htmlFor="due" className="pt-[7px] pl-4">
            Due by
          </label>
          <DateField id="due" value="08/ May / 2009  15: 19" />

          <label htmlFor="assign" className="text-[#0000ff]">
            Assign to
          </label>
          <div className="flex pt-0.5">
            <Combo id="assign" value="Demo operator" />
          </div>
          <label htmlFor="closed" className="pt-[7px] pl-4">
            Closed
          </label>
          <div className="pt-0.5">
            <DateField id="closed" value="    /        /                :" disabled />
          </div>
        </div>
      </fieldset>
    </div>
  </section>
);

const IncidentForm = () => (
  <form className="flex flex-col pt-1.5" onSubmit={(e) => e.preventDefault()}>
    <General />
    <div className="flex flex-1 flex-col pt-2">
      <Notes />
    </div>
    <fieldset className={clsx(group, "mt-2 flex pt-2 pr-[22px] pb-[3px] pl-[7px]")}>
      <legend className="absolute -top-[5px] left-2 bg-white px-px leading-3">
        <label htmlFor="tags">Tags</label>
      </legend>
      <input id="tags" className="h-[21px] flex-1 border border-[#abadb3] px-1 outline-none" />
    </fieldset>
    <Settings />
    <div className="flex pt-2.5 pl-1.5">
      <Button className="h-[23px] w-[114px] pr-3" menu>
        Send Email
      </Button>
      <Button className="ml-1.5 h-[23px] w-[114px] pr-3" menu>
        Print Report
      </Button>
      <Button className="ml-[15px] h-[23px] w-[120px] pt-0.5" disabled>
        Add to Kb
      </Button>
      <Button className="ml-auto h-[23px] w-[120px] pt-0.5" disabled>
        <span className="underline">S</span>ave
      </Button>
      <Button className="ml-1.5 h-[23px] w-[122px] pt-0.5">
        <span className="underline">C</span>lose
      </Button>
    </div>
  </form>
);

/* ---------- contact panel ---------- */

const contactFields = [
  { id: "name", label: "Name", value: "Test Contact" },
  { id: "email", label: "Email", value: "trial@targethelpdesk.com", spaced: "mb-6" },
  { id: "office", label: "Office phone", value: "01477 533988" },
  { id: "mobile", label: "Mobile phone", value: "" },
  { id: "alternate", label: "Alternate phone", value: "1888 9000 421" },
  { id: "fax", label: "Fax", value: "", spaced: "mb-2" },
  { id: "address", label: "Address", value: "" },
  { id: "address2", label: "", value: "" },
  { id: "address3", label: "", value: "" },
  { id: "zip", label: "Post/Zip code", value: "" },
];

const ownerTabs: TTab[] = [
  { label: "Test Contact", icon: "user", width: "w-[108px]" },
  { label: "Test Company", icon: "company", width: "w-[113px]" },
  { label: "Asset", icon: "asset", width: "w-[67px]" },
];

const detailTabs: TTab[] = [
  { label: "Contact details", width: "w-[97px]" },
  { label: "Custom Fields", width: "w-[90px]" },
  { label: "Feedback", width: "w-[68px]" },
  { label: "Web History", width: "w-[81px]" },
  { label: "Attac", width: "w-[60px]" },
];

const ContactPanel = () => (
  <section className="flex min-w-0 flex-col">
    <div className="flex h-10 justify-between pt-0.5">
      <h2 className="pt-4 pl-px font-bold">Incident# 2</h2>
      <div className="flex w-[254px] flex-col gap-px">
        {["16 hours 59 mins remaining", "23 hours 59 mins remaining"].map((text) => (
          <div
            key={text}
            className="h-[18px] rounded-[5px] border border-[#7d8a7d] bg-linear-to-b from-[#c4efc4] via-[#8fe08c] to-[#35cf35] pt-[3px] pl-[5px]"
          >
            {text}
          </div>
        ))}
      </div>
    </div>
    <div className="bg-[#f0f0f0]">
      <Tabs tabs={ownerTabs} label="Incident owner" />
    </div>
    <div className="mr-[3px] flex flex-1 flex-col border border-l-2 border-[#8b8b97] pr-0.5 pb-0.5">
      <div className="relative overflow-x-clip">
        <Tabs tabs={detailTabs} label="Contact" />
        <div className="absolute top-[3px] right-0 z-10 flex h-[14px] w-[28px] items-center justify-around bg-[#f0f0f0]">
          <button title="Previous tab" className="flex">
            <Caret className="rotate-90 text-[#8d8d8d]" />
          </button>
          <button title="Next tab" className="flex">
            <Caret className="-rotate-90 text-black" />
          </button>
        </div>
      </div>
      <div className="flex flex-1 flex-col border border-l-0 border-[#8b8b97] pt-3.5 pl-[7px]">
        <fieldset className="relative flex-1 border-t border-l border-[#2b80f5] pt-[9px] pl-[9px]">
          <legend className="absolute -top-[5px] left-2 bg-white px-px">Details</legend>
          {contactFields.map(({ id, label, value, spaced }) => (
            <div key={id} className={clsx("flex pb-[3px]", spaced)}>
              <label htmlFor={id} className="w-[102px] pt-0.5">
                {label}
              </label>
              <input
                id={id}
                aria-label={label || "Address line"}
                defaultValue={value}
                className="h-[21px] w-44 border border-[#abadb3] bg-white pt-0.5 pl-[2px] outline-none"
              />
              {id === "email" && (
                <button
                  title="Send email"
                  className="-mb-1 ml-1 flex h-[23px] w-[23px] items-center justify-center bg-[#f5f5f5]"
                >
                  <Icon name="mailTilt" />
                </button>
              )}
            </div>
          ))}
          <div className="flex">
            <label htmlFor="country" className="w-[102px] pt-0.5">
              Country
            </label>
            <div className="flex w-44">
              <Combo id="country" value="" disabled />
            </div>
          </div>
          <div className="flex pt-[11px]">
            <label htmlFor="contact-notes" className="w-[102px] pt-0.5">
              Notes
            </label>
            <div className="flex h-32 w-44 border border-[#abadb3] py-px pr-px">
              <textarea
                id="contact-notes"
                defaultValue="This is a test contact which you can log incidents against. To create more contacts, go to Maintenance | Client Contact."
                className="min-w-0 flex-1 resize-none overflow-hidden pt-0.5 pl-0.5 leading-[15px] outline-none"
              />
              <ScrollBar />
            </div>
          </div>
        </fieldset>
      </div>
    </div>
    <div className="flex items-start gap-[3px] pt-[7px]">
      <input
        id="options"
        type="checkbox"
        className="size-[15px] appearance-none border border-[#8e8f8f] bg-linear-to-br from-[#cfd3d6] to-[#f6f6f6]"
      />
      <label htmlFor="options" className="h-[15px] pt-[3px]">
        Show Options and Help
      </label>
    </div>
  </section>
);

/* ---------- taskbar ---------- */

const Taskbar = () => (
  <footer className="flex h-10 items-stretch border-t border-[#3c4a5c] bg-[#a6c0de] shadow-[inset_0_1px_0_#c3d4e8]">
    <div className="flex w-[121px] items-center bg-linear-to-r from-[#8596ad] to-[#9db5d1]">
      <button title="Start" className="pl-2">
        <svg viewBox="0 0 38 38" className="size-[38px]" aria-hidden="true">
          <circle cx="19" cy="19" r="17.500" fill="#17446f" stroke="#4f6a86" />
          <ellipse cx="19" cy="29" rx="12" ry="7" fill="#2fa5dc" opacity=".8" />
          <ellipse cx="19" cy="10" rx="14" ry="8" fill="#8fb6d6" opacity=".6" />
          <path d="M11 11q4-2.500 8 0l-1.500 7q-4-2-8 0Z" fill="#f0562a" />
          <path d="M20.500 12q4 2 8.500.5l-2 7q-4 1.500-8-.5Z" fill="#8cc63f" />
          <path d="M9 20q4-2 8 0l-1.500 7q-4-2-8 0Z" fill="#3f9ee8" />
          <path d="M18.500 21q4 2 8.500.5l-2 7q-4 1.500-8-.5Z" fill="#fccb2c" />
        </svg>
      </button>
      <button title="Internet Explorer" className="pl-7">
        <svg viewBox="0 0 32 32" className="size-8" aria-hidden="true">
          <path
            d="M27 20.500H21q-1.500 2.500-4.500 2.500-4.500 0-5-5H28Q29 5.500 17 5.500 5 6 4.500 17.500 5 28 16.500 28.500 25 28.500 27 20.500ZM11.500 14q1-4 5-4t5 4Z"
            fill="#1d72c6"
            stroke="#0d4b94"
            strokeWidth=".8"
          />
          <path d="M6 12q3-5 9-5.500" stroke="#7fd0ff" strokeWidth="2" fill="none" />
          <path d="M8 24Q1 32 2 24 5 14 18 6.500 30 0 29 7" stroke="#f2b42b" strokeWidth="2.200" fill="none" />
        </svg>
      </button>
    </div>
    <button
      title="Explorer"
      className="flex w-[60px] items-center justify-center rounded-sm border border-[#5c6e86] bg-linear-to-br from-[#e6edf6] to-[#b9cbe2]"
    >
      <svg viewBox="0 0 34 30" className="h-[30px] w-[34px]" aria-hidden="true">
        <path d="M2 4q0-2 2-2h7l2 3h8l1-2h9v23H2Z" fill="#f3dc8d" stroke="#c8a24a" />
        <path d="M4 9h26v16H4Z" fill="#fbeeb8" stroke="#dcbf6b" strokeWidth=".7" />
        <path d="M5 3h4v2H5Z" fill="#2fa34a" />
        <path d="M14 5h5v2h-5Z" fill="#e2483a" />
        <path d="M23 5h5v2h-5Z" fill="#3a86dc" />
        <path d="M6 29V19q0-2 2-2h18q2 0 2 2v10h-5v-7H11v7Z" fill="#a3d5f2" stroke="#5ba4d4" />
      </svg>
    </button>
    <button title="Media Player" className="flex w-[64px] items-center justify-center">
      <svg viewBox="0 0 30 28" className="h-7 w-[30px]" aria-hidden="true">
        <path d="M2 3l22-1.500V26H2Z" fill="#86bfe8" stroke="#5d9bcc" />
        <path d="M24 3h3v22h-3" fill="#b5daf3" stroke="#5d9bcc" />
        <circle cx="13" cy="13.500" r="9" fill="#ef6c1a" stroke="#fff" strokeWidth=".8" />
        <path d="M10 8.500v10l8.500-5Z" fill="#fff" />
      </svg>
    </button>
    <button
      title="Recorder"
      className="flex w-[60px] items-center justify-center rounded-sm border border-[#5c6e86] bg-linear-to-br from-[#edf2f9] to-[#cfdceb]"
    >
      <span className="flex size-8 items-center justify-center bg-[#e59a0c]">
        <span className="flex size-[26px] items-center justify-center bg-white text-[30px] leading-none font-black text-[#e59a0c]">
          G
        </span>
      </span>
    </button>
    <div className="flex flex-1 items-stretch justify-end text-white">
      <div className="flex items-center bg-linear-to-r from-[#a6c0de] to-[#8092ab] to-20% pl-12">
        <button title="Show hidden icons" className="pr-3">
          <Caret className="rotate-180 text-white" />
        </button>
        <svg viewBox="0 0 64 18" className="h-[18px] w-16" aria-hidden="true">
          <path d="M2.500 1v16" stroke="#fff" strokeWidth="2" />
          <path d="M4 2h6v2h5l-2 3 1 3H8V8H4Z" fill="#fff" stroke="#4b5a70" strokeWidth=".7" />
          <path d="M28 4h12v9H28Z" fill="#5f7087" stroke="#fff" strokeWidth="1.500" />
          <path d="M26 1v4q2 2 3 0V1M27.500 6v11" stroke="#fff" strokeWidth="1.300" fill="none" />
          <path d="M35.500 7.500 41 17H30Z" fill="#f7c81e" stroke="#7a5d00" strokeWidth=".6" />
          <path d="M35.500 10.500v3M35.500 14.500v1" stroke="#222" />
          <path d="M50 6h3l4-4.500v14L53 11h-3Z" fill="#e9edf3" stroke="#4b5a70" strokeWidth=".7" />
          <circle cx="59.500" cy="12.500" r="4.300" fill="#dd2b22" stroke="#fff" strokeWidth=".6" />
          <path d="M57.700 10.700l3.600 3.600M61.300 10.700l-3.600 3.600" stroke="#fff" strokeWidth="1.200" />
        </svg>
        <div className="w-[88px] pl-1.5 text-center font-['Open_Sans','Noto_Sans',sans-serif] text-[11px] leading-[17px]">
          <p>15:23</p>
          <p>07/05/2009</p>
        </div>
        <button title="Show desktop" className="h-full w-3.5 border-l border-[#4f5f75] bg-linear-to-b from-[#97a7bb] to-[#5e6f86]" />
      </div>
    </div>
  </footer>
);

/* ---------- page ---------- */

const documentTabs: TTab[] = [
  { label: "New Incident", icon: "newDoc", width: "w-[112px]" },
  { label: "Full Incident Report - Results", icon: "map", width: "w-[200px]" },
  { label: "*", width: "w-[21px]" },
];

const incidentTabs: TTab[] = [
  { label: "Incident Details", icon: "note", width: "w-[124px]" },
  { label: "Custom Fields", icon: "dbUser", width: "w-[112px]" },
  { label: "Group", icon: "chain", width: "w-[71px]" },
  { label: "Time & Materials", icon: "clock", width: "w-[127px]" },
  { label: "Suggest Solution", icon: "bulb", width: "w-[129px]" },
  { label: "History", icon: "folder", width: "w-[74px]" },
  { label: "Incident History", icon: "cylinderArrow", width: "w-[121px]" },
  { label: "Feedback", icon: "feedback", width: "w-[90px]" },
];

const App = () => {
  return (
    <div className="flex min-h-screen flex-col bg-white font-['Liberation_Sans',Arial,sans-serif] text-xs leading-[14px] text-black">
      <Header />
      <div className="flex flex-1">
        <Sidebar />
        <main className="ml-1 flex min-w-0 flex-1 flex-col border-l-2 border-[#8b8b97]">
          {/* document tabs */}
          <div className="flex items-end bg-[#f0f8ff]">
            <div
              role="tablist"
              aria-label="Documents"
              className="flex flex-1 items-end font-['DejaVu_Sans',Verdana,sans-serif] text-[11px]"
            >
              {documentTabs.map((tab, i) => (
                <button
                  key={tab.label}
                  role="tab"
                  aria-selected={i === 0}
                  className={clsx(
                    "flex items-center gap-2 border border-b-0 border-l-0 border-[#8b8b97]",
                    tab.width,
                    i === 0 ? "relative z-10 -mb-px h-7 bg-white" : "h-[25px] border-r-2",
                    i > 0 && tabShade,
                    tab.icon ? "pl-[3px]" : "justify-center"
                  )}
                >
                  {tab.icon && <Icon name={tab.icon} />}
                  {tab.label}
                </button>
              ))}
            </div>
            <button
              title="Close tab"
              className="mb-2 flex h-4 w-3 items-center justify-center rounded-l-sm border border-r-0 border-[#4a1414] bg-linear-to-b from-[#e59a8c] to-[#b8362a] text-white"
            >
              <svg viewBox="0 0 8 8" className="size-2" aria-hidden="true">
                <path d="M1 1l6 6M7 1 1 7" stroke="#4a1414" strokeWidth="3" />
                <path d="M1 1l6 6M7 1 1 7" stroke="#fff" strokeWidth="1.500" />
              </svg>
            </button>
          </div>
          <div className="border-t border-[#8b8b97] bg-[#f0f0f0]">
            <Tabs tabs={incidentTabs} label="Incident sections" />
          </div>
          <div className="mb-[33px] grid flex-1 grid-cols-[655fr_406fr] items-start gap-2.5 border-y border-[#8b8b97] pr-[18px] pl-2 pb-[41px]">
            <div className="contents *:h-full">
              <IncidentForm />
              <ContactPanel />
            </div>
          </div>
        </main>
      </div>
      <Taskbar />
    </div>
  );
};

export default App;
